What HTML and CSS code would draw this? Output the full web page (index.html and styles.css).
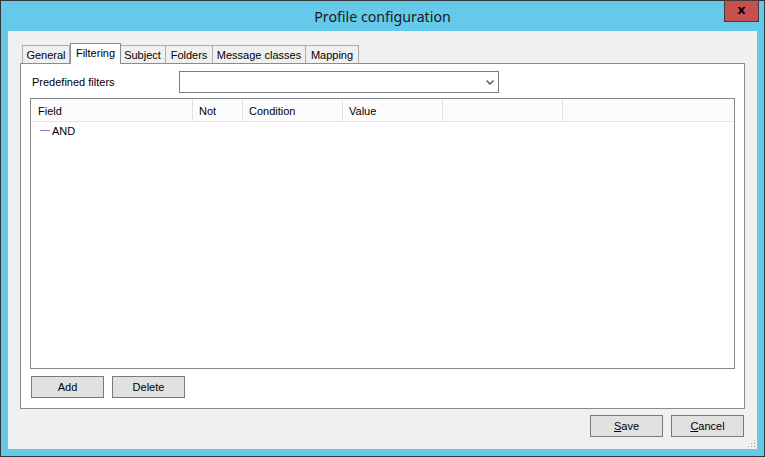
FILE: index.html
```html
<!DOCTYPE html>
<html>
<head>
<meta charset="utf-8">
<link rel="stylesheet" href="styles.css">
</head>
<body>
<div class="window">
  <div class="titlebar">
    <span class="title">Profile configuration</span>
    <div class="close">x</div>
  </div>
  <div class="client">
    <div class="tabs">
      <div class="tab t-general">General</div>
      <div class="tab selected t-filtering">Filtering</div>
      <div class="tab t-subject">Subject</div>
      <div class="tab t-folders">Folders</div>
      <div class="tab t-message">Message classes</div>
      <div class="tab t-mapping">Mapping</div>
    </div>
    <div class="panel">
      <div class="filter-row">
        <span class="label">Predefined filters</span>
        <div class="combo">
          <svg class="chev" width="8" height="5" viewBox="0 0 8 5"><path d="M0.5 0.5 L4 4 L7.5 0.5" fill="none" stroke="#555" stroke-width="1.4"/></svg>
        </div>
      </div>
      <div class="grid">
        <div class="grid-head">
          <div class="hcell c-field">Field</div>
          <div class="hcell c-not">Not</div>
          <div class="hcell c-cond">Condition</div>
          <div class="hcell c-value">Value</div>
          <div class="hcell c-blank"></div>
          <div class="hcell c-rest"></div>
        </div>
        <div class="grid-row">
          <span class="tree-line"></span><span>AND</span>
        </div>
      </div>
      <div class="panel-buttons">
        <button class="btn">Add</button>
        <button class="btn">Delete</button>
      </div>
    </div>
    <div class="dialog-buttons">
      <button class="btn"><u>S</u>ave</button>
      <button class="btn"><u>C</u>ancel</button>
    </div>
    <div class="grip">
      <span></span><span></span><span></span><span></span><span></span><span></span>
    </div>
  </div>
</div>
</body>
</html>
```

FILE: styles.css
```css
* { box-sizing: border-box; }
html, body { margin: 0; padding: 0; }
body {
  width: 765px;
  height: 457px;
  overflow: hidden;
  font-family: "Liberation Sans", Arial, sans-serif;
  font-size: 11px;
  color: #000;
}
.window {
  position: relative;
  width: 765px;
  height: 457px;
  background: #65c9ea;
  border: 1px solid #353535;
  padding: 0 7px 7px 7px;
  display: flex;
  flex-direction: column;
}
.titlebar {
  height: 30px;
  display: flex;
  align-items: center;
  justify-content: center;
}
.title {
  font-family: "Noto Sans", "Open Sans", sans-serif;
  font-size: 14.2px;
  color: #1a1a1a;
}
.close {
  position: absolute;
  top: -1px;
  right: 5px;
  width: 35px;
  height: 22px;
  background: #c75050;
  border: 1px solid #4a3a3a;
  color: #000;
  font-family: "DejaVu Sans", sans-serif;
  font-weight: bold;
  font-size: 13px;
  line-height: 17px;
  text-align: center;
}
.client {
  position: relative;
  flex: 1;
  background: #f0f0f0;
  padding: 12px 12px 0 12px;
  display: flex;
  flex-direction: column;
}
.tabs {
  height: 20px;
  display: flex;
  align-items: flex-end;
  padding-left: 2px;
  position: relative;
  z-index: 1;
}
.tab {
  height: 18px;
  border: 1px solid #acacac;
  border-bottom: none;
  background: #f0f0f0;
  margin-left: -1px;
  text-align: center;
  line-height: 18px;
  white-space: nowrap;
}
.tab:first-child { margin-left: 0; }
.tab.selected {
  height: 21px;
  background: #fff;
  border-color: #898c95;
  margin-bottom: -1px;
  margin-left: 0;
  margin-right: -1px;
  line-height: 19px;
  position: relative;
  z-index: 2;
}
.t-general { width: 48px; }
.t-filtering { width: 51px; }
.t-subject { width: 47px; }
.t-folders { width: 48px; }
.t-message { width: 94px; }
.t-mapping { width: 54px; }

.panel {
  height: 346px;
  background: #fff;
  border: 1px solid #898c95;
  padding: 7px 0 0 9px;
  display: flex;
  flex-direction: column;
}
.filter-row {
  display: flex;
  align-items: center;
  height: 22px;
}
.label {
  padding-left: 2px;
  width: 149px;
}
.combo {
  width: 320px;
  height: 22px;
  border: 1px solid #7a7a7a;
  background: #fff;
  display: flex;
  align-items: center;
  justify-content: flex-end;
  padding-right: 4px;
}
.chev { display: block; margin-top: 1px; }

.grid {
  margin-top: 5px;
  width: 705px;
  height: 271px;
  border: 1px solid #828790;
  background: #fff;
  padding: 0 1px;
}
.grid-head {
  display: flex;
  height: 23px;
  border-bottom: 1px solid #e5e5e5;
}
.hcell {
  height: 22px;
  background: #fcfcfc;
  border-right: 1px solid #e3e3e3;
  border-left: 1px solid #fff;
  line-height: 24px;
  padding-left: 5px;
  white-space: nowrap;
}
.c-field { width: 161px; }
.c-not { width: 50px; }
.c-cond { width: 100px; }
.c-value { width: 100px; }
.c-blank { width: 120px; }
.c-rest { flex: 1; border-right: none; }
.grid-row {
  display: flex;
  align-items: center;
  height: 17px;
  padding-left: 8px;
}
.tree-line {
  width: 10px;
  height: 1px;
  background: #8080f0;
  margin-right: 2px;
}

.panel-buttons {
  display: flex;
  gap: 8px;
  margin-top: 7px;
  padding-left: 1px;
}
.btn {
  width: 73px;
  height: 22px;
  background: #e1e1e1;
  border: 1px solid #7a7a7a;
  font-family: "Liberation Sans", Arial, sans-serif;
  font-size: 11px;
  color: #000;
  padding: 0;
  margin: 0;
}
.btn u { text-decoration: underline; text-underline-offset: 1px; }
.dialog-buttons {
  display: flex;
  justify-content: flex-end;
  gap: 8px;
  margin-top: 6px;
  padding-right: 1px;
}
.grip {
  position: absolute;
  right: 2px;
  bottom: 2px;
  width: 7px;
  height: 7px;
}
.grip span {
  position: absolute;
  width: 1px;
  height: 1px;
  background: #a0a0a0;
}
.grip span:nth-child(1) { right: 0; bottom: 0; }
.grip span:nth-child(2) { right: 3px; bottom: 0; }
.grip span:nth-child(3) { right: 6px; bottom: 0; }
.grip span:nth-child(4) { right: 0; bottom: 3px; }
.grip span:nth-child(5) { right: 3px; bottom: 3px; }
.grip span:nth-child(6) { right: 0; bottom: 6px; }
```
